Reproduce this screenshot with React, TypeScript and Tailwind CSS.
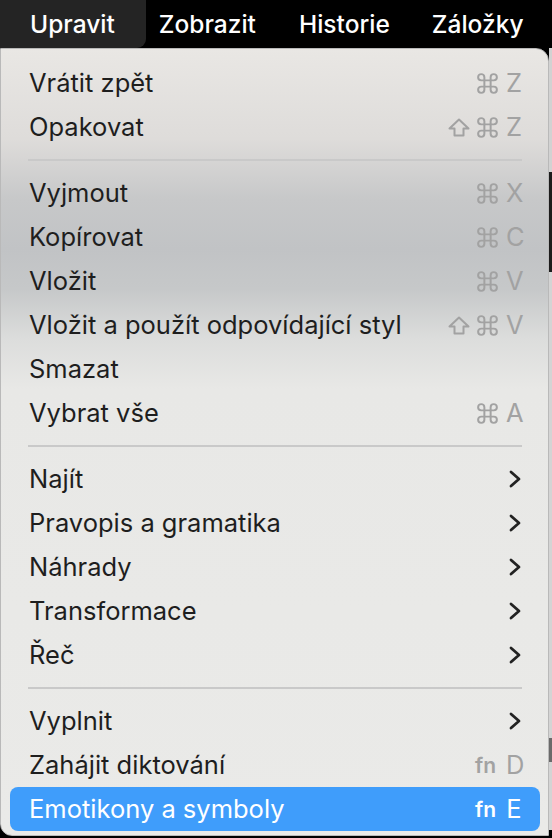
import { Command } from "lucide-react";

type Item = {
  label: string;
  keys?: string;
  shift?: boolean;
  fn?: boolean;
  sub?: boolean;
  active?: boolean;
};

const groups: Item[][] = [
  [
    { label: "Vrátit zpět", keys: "Z" },
    { label: "Opakovat", keys: "Z", shift: true },
  ],
  [
    { label: "Vyjmout", keys: "X" },
    { label: "Kopírovat", keys: "C" },
    { label: "Vložit", keys: "V" },
    { label: "Vložit a použít odpovídající styl", keys: "V", shift: true },
    { label: "Smazat" },
    { label: "Vybrat vše", keys: "A" },
  ],
  [
    { label: "Najít", sub: true },
    { label: "Pravopis a gramatika", sub: true },
    { label: "Náhrady", sub: true },
    { label: "Transformace", sub: true },
    { label: "Řeč", sub: true },
  ],
  [
    { label: "Vyplnit", sub: true },
    { label: "Zahájit diktování", keys: "D", fn: true },
    { label: "Emotikony a symboly", keys: "E", fn: true, active: true },
  ],
];

function ShiftIcon() {
  return (
    <svg width="22" height="19" viewBox="0 0 22 19" fill="none">
      <path
        d="M11 1.5 20.5 10.5H15.5V17.5H6.5V10.5H1.5Z"
        stroke="currentColor"
        strokeWidth="2"
        strokeLinejoin="round"
      />
    </svg>
  );
}

function Chevron() {
  return (
    <svg width="12" height="18" viewBox="0 0 12 18" fill="none">
      <path
        d="M2 2 10 9 2 16"
        stroke="currentColor"
        strokeWidth="2.8"
        strokeLinecap="round"
        strokeLinejoin="round"
      />
    </svg>
  );
}

function Row({ item }: { item: Item }) {
  const dim = item.active ? "text-white" : "text-[#a2a2a2]";
  return (
    <div
      className={`flex h-[44px] items-center justify-between rounded-[8px] pl-[19px] pr-[18px] ${
        item.active ? "bg-[#3f9dfb] text-white" : "text-[#1e1e1e]"
      }`}
    >
      <span>{item.label}</span>
      {item.sub && (
        <span className="text-[#222] pr-[1px]">
          <Chevron />
        </span>
      )}
      {item.keys && (
        <span className={`flex items-center ${dim}`}>
          {item.shift && (
            <span className="mr-[5px]">
              <ShiftIcon />
            </span>
          )}
          {item.fn ? (
            <span className="mr-[10px] text-[21px] font-semibold leading-none">fn</span>
          ) : (
            <Command size={25} strokeWidth={1.9} className="mr-[6px]" />
          )}
          <span className="inline-block w-[16px] text-center">{item.keys}</span>
        </span>
      )}
    </div>
  );
}

export default function App() {
  return (
    <div className="flex h-[838px] w-[552px] flex-col overflow-hidden bg-black font-['Inter',sans-serif] text-[25.5px]">
      <div className="flex h-[48px] shrink-0 items-start bg-black text-[24.5px] font-medium text-white">
        <div className="flex h-[48px] items-center rounded-br-[9px] bg-[#242424] pl-[30px] pr-[31px]">
          Upravit
        </div>
        <div className="ml-[13px] flex h-[48px] items-center">Zobrazit</div>
        <div className="ml-[43px] flex h-[48px] items-center">Historie</div>
        <div className="ml-[42px] flex h-[48px] items-center">Záložky</div>
      </div>
      <div className="flex flex-1">
        <div className="flex h-[788px] w-[549px] flex-col rounded-tr-[13px] rounded-bl-[12px] border border-[#b9b9b9] bg-[linear-gradient(180deg,#e9e7e4_0px,#dedcda_90px,#c7c8c9_150px,#c1c3c5_200px,#c6c8c9_240px,#dcdddc_290px,#e8e8e6_340px,#eaeae8_100%)] pb-[5px] pl-[9px] pr-[8px] pt-[12px]">
          {groups.map((g, gi) => (
            <div key={gi}>
              {gi > 0 && (
                <div className="flex h-[22px] items-center pl-[18px] pr-[18px]">
                  <div className="h-[2px] w-full bg-[#c9c9c9]" />
                </div>
              )}
              {g.map((it) => (
                <Row key={it.label} item={it} />
              ))}
            </div>
          ))}
        </div>
        <div className="flex flex-1 flex-col">
          <div className="h-[124px] bg-[#d2d2d2]" />
          <div className="h-[100px] bg-[#1c1c1c]" />
          <div className="h-[466px] bg-[#d4d4d4]" />
          <div className="h-[24px] bg-[#6a6a6a]" />
          <div className="flex-1 bg-[#d4d4d4]" />
          <div className="h-[8px] bg-black" />
        </div>
      </div>
    </div>
  );
}
